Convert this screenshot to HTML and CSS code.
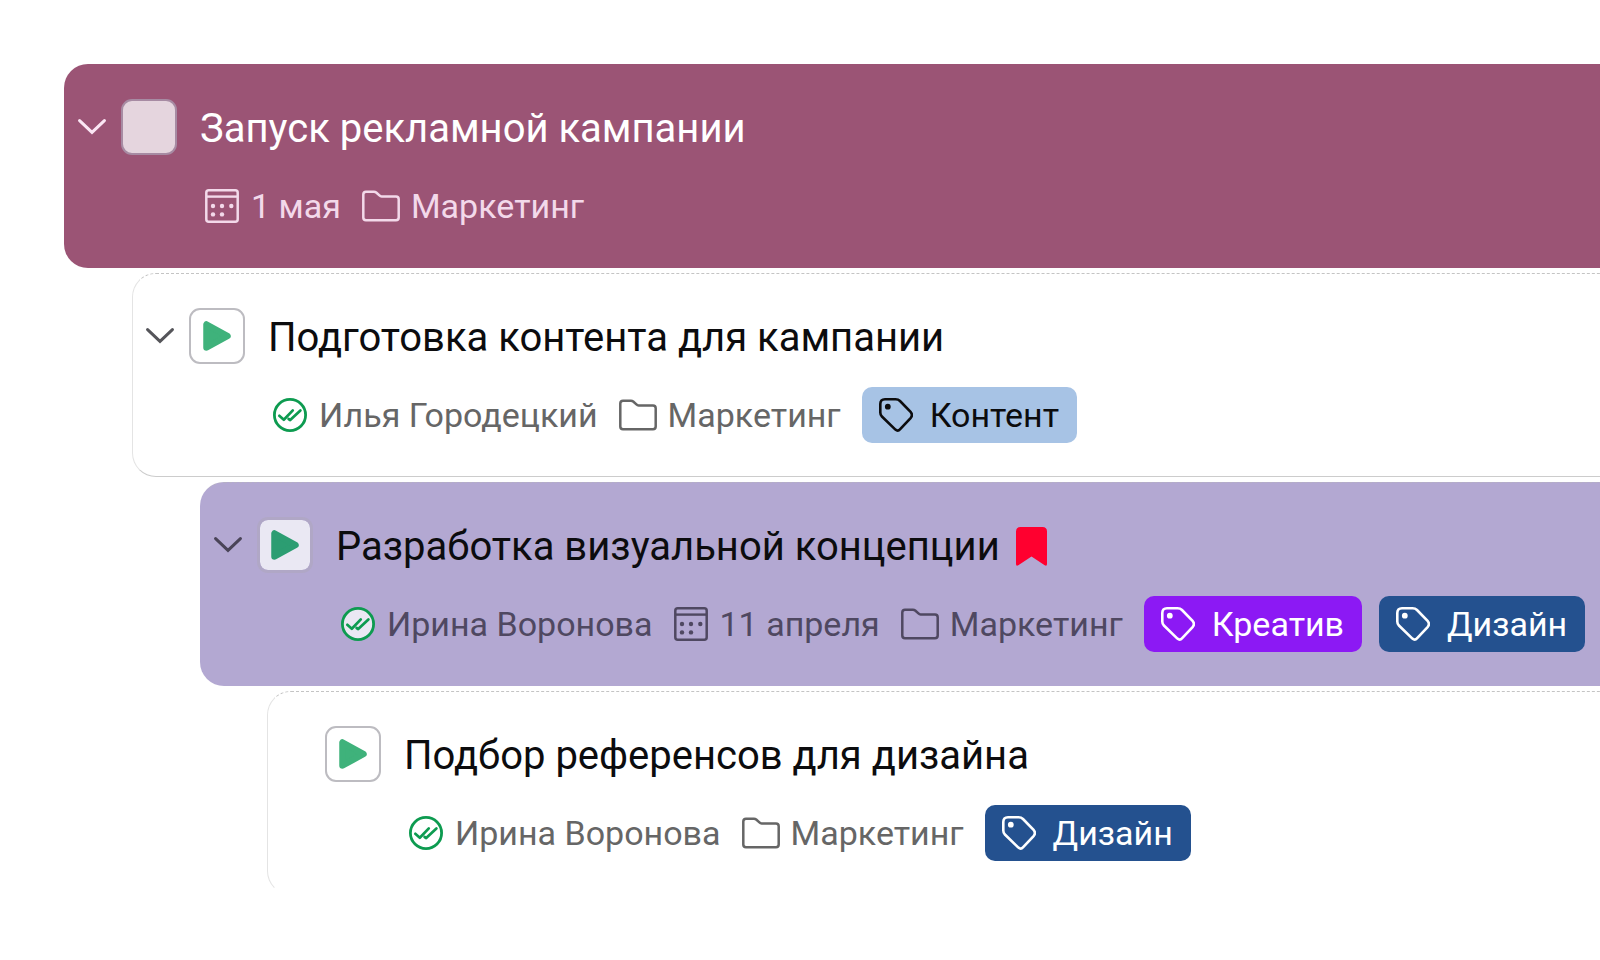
FILE: index.html
```
<!DOCTYPE html>
<html lang="ru">
<head>
    <meta charset="UTF-8">
    <meta name="viewport" content="width=device-width, initial-scale=1.0">
    <title>Задачи</title>
    <link rel="stylesheet" href="styles.css">
</head>
<body>
    <svg class="sprite" aria-hidden="true">
        <symbol id="icon-chevron" viewBox="0 0 28 16">
            <path d="M1.6 1.6L14 13.4L26.4 1.6" fill="none" stroke="currentColor" stroke-width="3" stroke-linecap="round"/>
        </symbol>
        <symbol id="icon-play" viewBox="0 0 28 30">
            <path d="M3.5 3.5V26.5L24.5 15Z" fill="currentColor" stroke="currentColor" stroke-width="6.5" stroke-linejoin="round"/>
        </symbol>
        <symbol id="icon-calendar" viewBox="0 0 34 34">
            <rect x="1.3" y="1.3" width="31.4" height="31.4" rx="2.5" fill="none" stroke="currentColor" stroke-width="2.5"/>
            <path d="M1.2 7.6H32.8" stroke="currentColor" stroke-width="2.4"/>
            <g fill="currentColor">
                <circle cx="8" cy="17" r="2.2"/>
                <circle cx="17" cy="17" r="2.2"/>
                <circle cx="26.3" cy="17" r="2.2"/>
                <circle cx="8" cy="25.4" r="2.2"/>
                <circle cx="17" cy="25.4" r="2.2"/>
            </g>
        </symbol>
        <symbol id="icon-folder" viewBox="0 0 38 32">
            <path d="M4 1.7H12C13 1.7 13.6 2 14.2 2.5L17.4 5.4C18 6 18.7 6.4 19.6 6.4H34Q36.7 6.4 36.7 9.2V27.6Q36.7 30.3 34 30.3H4Q1.3 30.3 1.3 27.6V4.5Q1.3 1.7 4 1.7Z" fill="none" stroke="currentColor" stroke-width="2.5"/>
        </symbol>
        <symbol id="icon-done" viewBox="0 0 34 34">
            <circle class="done-circle" cx="17" cy="17" r="15.6" stroke="currentColor" stroke-width="2.8"/>
            <path d="M6.3 17.8L10.8 21.8L19.8 12.4M15.6 21L17.2 22L27.4 12.4" fill="none" stroke="currentColor" stroke-width="2.7" stroke-linecap="round" stroke-linejoin="round"/>
        </symbol>
        <symbol id="icon-tag" viewBox="0 0 34 34">
            <path d="M6 1.3H16.5Q19.3 1.3 21 3L31.8 14.2Q34 17 31.8 19.8L21.2 31.2Q18.9 33.8 16.4 31.6L2.9 18.5Q1.3 17 1.3 14.5V6Q1.3 1.3 6 1.3Z" fill="none" stroke="currentColor" stroke-width="2.6"/>
            <circle cx="8.8" cy="8.7" r="2.9" fill="currentColor"/>
        </symbol>
        <symbol id="icon-bookmark" viewBox="0 0 31 39">
            <path d="M4.5 0H26.5Q31 0 31 4.5V37Q31 39.5 28.7 38.3L15.5 29.5L2.3 38.3Q0 39.5 0 37V4.5Q0 0 4.5 0Z" fill="currentColor"/>
        </symbol>
    </svg>

    <ul class="task-list">
        <li class="task task-plum">
            <button class="toggle" aria-label="Свернуть"><svg><use href="#icon-chevron"/></svg></button>
            <input class="status" type="checkbox" id="task-1">
            <div class="task-body">
                <label class="task-title" for="task-1">Запуск рекламной кампании</label>
                <div class="task-meta">
                    <span class="meta-item"><svg class="icon"><use href="#icon-calendar"/></svg>1 мая</span>
                    <span class="meta-item meta-folder"><svg class="icon"><use href="#icon-folder"/></svg>Маркетинг</span>
                </div>
            </div>
        </li>

        <li class="task level-1">
            <button class="toggle" aria-label="Свернуть"><svg><use href="#icon-chevron"/></svg></button>
            <button class="status" aria-label="Начать"><svg><use href="#icon-play"/></svg></button>
            <div class="task-body">
                <div class="task-title">Подготовка контента для кампании</div>
                <div class="task-meta">
                    <span class="meta-item"><svg class="icon icon-done"><use href="#icon-done"/></svg>Илья Городецкий</span>
                    <span class="meta-item meta-folder"><svg class="icon"><use href="#icon-folder"/></svg>Маркетинг</span>
                    <div class="tags">
                        <span class="tag tag-content"><svg class="icon"><use href="#icon-tag"/></svg>Контент</span>
                    </div>
                </div>
            </div>
        </li>

        <li class="task task-lavender level-2">
            <button class="toggle" aria-label="Свернуть"><svg><use href="#icon-chevron"/></svg></button>
            <button class="status" aria-label="Начать"><svg><use href="#icon-play"/></svg></button>
            <div class="task-body">
                <div class="task-title">Разработка визуальной концепции<svg class="bookmark"><use href="#icon-bookmark"/></svg></div>
                <div class="task-meta">
                    <span class="meta-item"><svg class="icon icon-done"><use href="#icon-done"/></svg>Ирина Воронова</span>
                    <span class="meta-item"><svg class="icon"><use href="#icon-calendar"/></svg>11 апреля</span>
                    <span class="meta-item meta-folder"><svg class="icon"><use href="#icon-folder"/></svg>Маркетинг</span>
                    <div class="tags">
                        <span class="tag tag-creative"><svg class="icon"><use href="#icon-tag"/></svg>Креатив</span>
                        <span class="tag tag-design"><svg class="icon"><use href="#icon-tag"/></svg>Дизайн</span>
                    </div>
                </div>
            </div>
        </li>

        <li class="task task-leaf level-3">
            <button class="status" aria-label="Начать"><svg><use href="#icon-play"/></svg></button>
            <div class="task-body">
                <div class="task-title">Подбор референсов для дизайна</div>
                <div class="task-meta">
                    <span class="meta-item"><svg class="icon icon-done"><use href="#icon-done"/></svg>Ирина Воронова</span>
                    <span class="meta-item meta-folder"><svg class="icon"><use href="#icon-folder"/></svg>Маркетинг</span>
                    <div class="tags">
                        <span class="tag tag-design"><svg class="icon"><use href="#icon-tag"/></svg>Дизайн</span>
                    </div>
                </div>
            </div>
        </li>
    </ul>
</body>
</html>
```

FILE: styles.css
```
* {
    box-sizing: border-box;
}

body {
    margin: 0;
    font-family: Roboto, sans-serif;
    background-color: #fff;
    color: #0c0c0e;
    overflow-x: hidden;
}

button {
    padding: 0;
    background: none;
    border: none;
    cursor: pointer;
}

svg {
    display: block;
    flex-shrink: 0;
}

.sprite {
    display: none;
}

.task-list {
    list-style: none;
    margin: 0;
    padding: 64px 0 64px 64px;
    display: flex;
    flex-direction: column;
    gap: 5px;
}

.task {
    --meta: #666;
    --chevron: #55555a;
    --done-fill: #fff;
    display: flex;
    align-items: flex-start;
    padding: 34px 0 33px 13px;
    border: 1px solid #e4e4e4;
    border-top: 1px dashed #c4c4c4;
    border-bottom-color: #ccc;
    border-right: none;
    border-radius: 24px 0 0 24px;
    white-space: nowrap;
}

.level-1 {
    margin-left: 68px;
}

.level-2 {
    margin-left: 136px;
}

.level-3 {
    margin-left: 203px;
}

.task-plum {
    --meta: #f3d9ea;
    --chevron: #fbe6f4;
    background-color: #9b5475;
    border-color: #9b5475;
    color: #fff;
}

.task-lavender {
    --meta: #4f4861;
    --chevron: #4a4458;
    --done-fill: #eae8f3;
    background-color: #b3a8d2;
    border-color: #b3a8d2;
    border-top-color: #b5b0c4;
}

.task-leaf {
    padding-left: 57px;
    border-bottom-color: transparent;
}

.toggle {
    height: 56px;
    margin-right: 15px;
    color: var(--chevron);
}

.toggle svg {
    width: 28px;
    height: 16px;
}

.status {
    appearance: none;
    flex-shrink: 0;
    width: 56px;
    height: 56px;
    margin: 0;
    display: flex;
    justify-content: center;
    align-items: center;
    background-color: #fff;
    border: 2px solid #bdbcc1;
    border-radius: 11px;
    color: #3fb27b;
}

.status svg {
    width: 28px;
    height: 30px;
}

.task-plum .status {
    background-color: #e5d5de;
    border-color: #a78ba3;
}

.task-lavender .status {
    background-color: #eae8f3;
    background-clip: padding-box;
    border: 3px solid #b0a7c6;
    color: #2c9d72;
}

.task-body {
    margin-left: 23px;
}

.task-title {
    display: flex;
    align-items: center;
    gap: 16px;
    height: 58px;
    font-size: 40px;
}

.bookmark {
    width: 31px;
    height: 39px;
    color: #ff002f;
}

.task-meta {
    display: flex;
    align-items: center;
    gap: 21px;
    height: 56px;
    margin-top: 21px;
    padding-left: 5px;
    font-size: 34px;
    color: var(--meta);
}

.meta-item {
    display: flex;
    align-items: center;
    gap: 12px;
}

.icon {
    width: 34px;
    height: 34px;
}

.meta-folder {
    gap: 11px;
}

.meta-folder .icon {
    width: 38px;
    height: 32px;
}

.icon-done {
    color: #0d9b50;
}

.done-circle {
    fill: var(--done-fill);
}

.tags {
    display: flex;
    gap: 17px;
}

.tag {
    display: flex;
    align-items: center;
    gap: 17px;
    height: 56px;
    padding: 0 18px 0 17px;
    border-radius: 10px;
    color: #fff;
}

.tag-content {
    background-color: #a7c3e5;
    color: #0c0c0e;
}

.tag-creative {
    background-color: #8c19f4;
}

.tag-design {
    background-color: #24518f;
}
```
